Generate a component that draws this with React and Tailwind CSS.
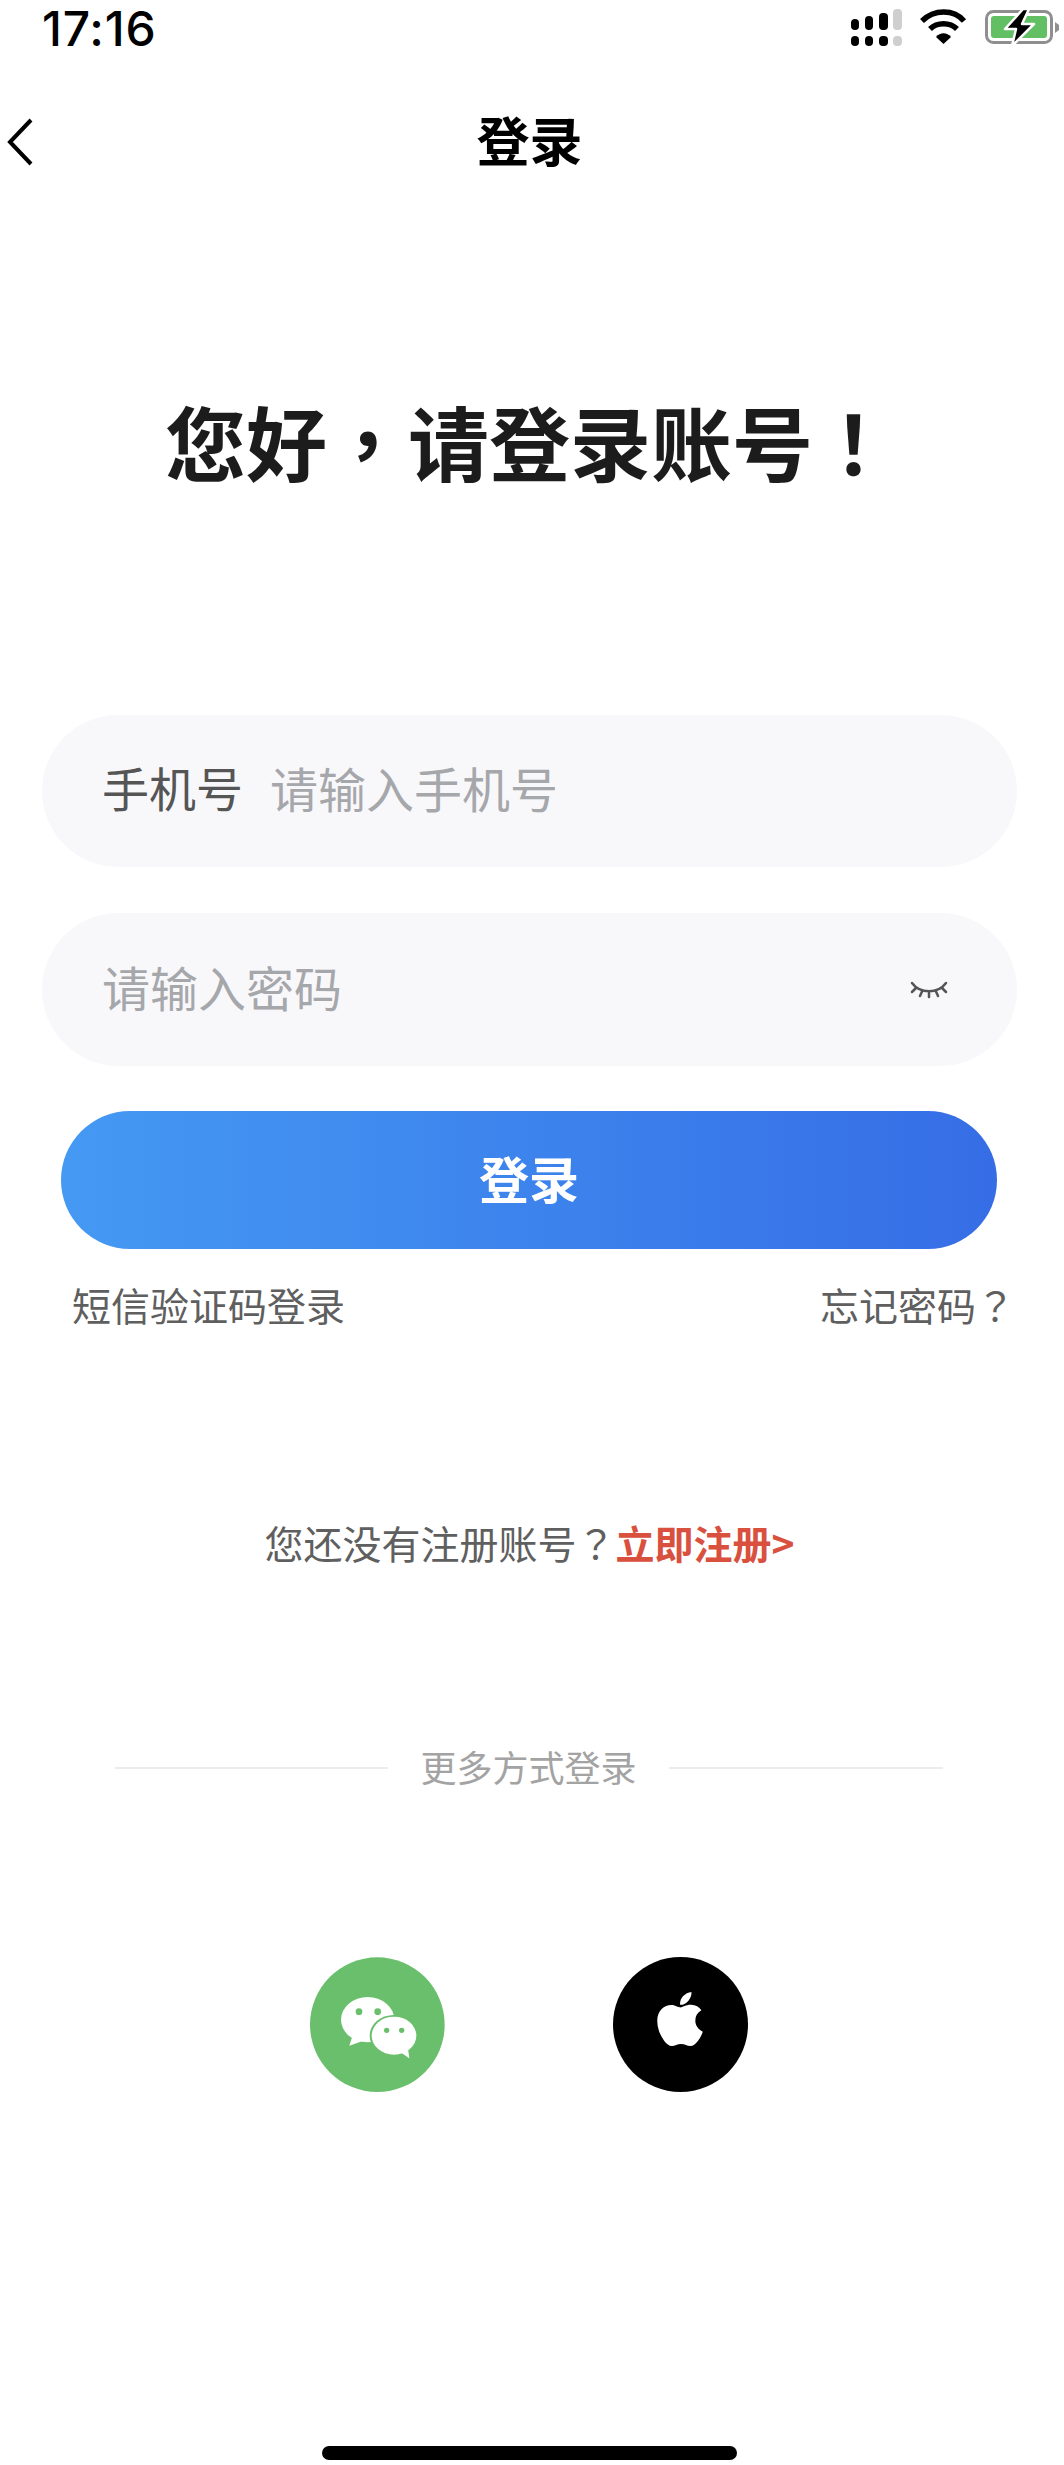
import { FaApple } from 'react-icons/fa';

const font = { fontFamily: '"Noto Sans CJK SC", "Noto Sans", sans-serif' };
// centered full-width punctuation, like the reference
const punct = { fontFamily: '"Noto Sans CJK TC", sans-serif' };

function StatusIcons() {
  return (
    <svg width="244" height="60" viewBox="0 0 244 60" className="block">
      {/* signal */}
      <rect x="31" y="19" width="8" height="11" rx="4" fill="#000" />
      <rect x="45" y="16" width="8" height="14" rx="4" fill="#000" />
      <rect x="59" y="13" width="9" height="17" rx="4" fill="#000" />
      <rect x="73" y="9" width="9" height="21" rx="4" fill="#cfcfcf" />
      <rect x="31" y="36" width="8" height="10" rx="4" fill="#000" />
      <rect x="45" y="36" width="8" height="10" rx="4" fill="#000" />
      <rect x="59" y="36" width="9" height="10" rx="4" fill="#000" />
      <rect x="73" y="36" width="9" height="10" rx="4" fill="#cfcfcf" />
      {/* wifi */}
      <path d="M102 21 C114 9 134 9 144 21" fill="none" stroke="#000" strokeWidth="5.5" />
      <path d="M110 29 C117 22 130 22 137 29" fill="none" stroke="#000" strokeWidth="5.5" />
      <path d="M116 37 C120 32 127 32 131 37 L123.500 44 Z" fill="#000" />
      {/* battery */}
      <rect x="166.500" y="11.500" width="65" height="31" rx="7" fill="none" stroke="#8f8f8f" strokeWidth="3" />
      <rect x="171" y="16" width="56" height="22" rx="3" fill="#62bf63" />
      <path d="M235 22 L239 25 L239 30 L235 33 Z" fill="#8f8f8f" />
      <path d="M203 9 L185 29 L196 29 L192 46 L214 24 L202 24 L209 9 Z" fill="#000" stroke="#fff" strokeWidth="2.500" strokeLinejoin="round" />
    </svg>
  );
}

function ClosedEye() {
  return (
    <svg width="38" height="18" viewBox="0 0 38 18" fill="none" stroke="#555" strokeWidth="2.5" strokeLinecap="round">
      <path d="M2 2 C10 13 28 13 36 2" />
      <path d="M6 7 L2 11" />
      <path d="M12 10.500 L10 15" />
      <path d="M19 12 L19 16" />
      <path d="M26 10.500 L28 15" />
      <path d="M32 7 L36 11" />
    </svg>
  );
}

function WechatIcon() {
  return (
    <svg width="135" height="135" viewBox="90 80 405 405" className="block">
      <circle cx="292" cy="283" r="202" fill="#6abf6c" />
      <ellipse cx="263" cy="268" rx="80" ry="68" fill="#fff" />
      <path d="M218 315 L208 346 L248 332 Z" fill="#fff" />
      <circle cx="237" cy="244" r="10" fill="#6abf6c" />
      <circle cx="293" cy="244" r="10" fill="#6abf6c" />
      <ellipse cx="341" cy="316" rx="72" ry="62" fill="#6abf6c" />
      <ellipse cx="342" cy="316" rx="67" ry="57" fill="#fff" />
      <path d="M360 365 L388 384 L384 355 Z" fill="#fff" />
      <circle cx="320" cy="300" r="8" fill="#6abf6c" />
      <circle cx="365" cy="300" r="8" fill="#6abf6c" />
    </svg>
  );
}

export default function App() {
  return (
    <div className="w-[1064px] h-[2465px] bg-white flex flex-col overflow-hidden" style={font}>
      {/* status bar */}
      <div className="h-[60px] flex justify-between">
        <span className="pl-[42px] pt-[1px] text-[48px] leading-[56px] font-medium text-black tracking-[0.8px]" style={{ fontFamily: 'Inter, sans-serif' }}>17:16</span>
        <StatusIcons />
      </div>

      <div className="w-[1059px] flex-1 flex flex-col">
        {/* nav */}
        <div className="relative h-[164px] flex items-center justify-center pb-[6px]">
          <svg width="30" height="50" viewBox="0 0 30 50" fill="none" stroke="#000" strokeWidth="4" className="absolute left-[5px] top-[57px]">
            <path d="M26 3 L5 25 L26 47" />
          </svg>
          <span className="text-[53px] leading-[60px] font-bold text-black">登录</span>
        </div>

        <h1 className="mt-[161px] h-[110px] text-center text-[81px] leading-[110px] font-bold text-[#1c1c1c]">
          您好<span style={punct}>，</span>请登录账号<span style={punct}>！</span>
        </h1>

        {/* form */}
        <div className="mt-[220px] mx-[42px] h-[152px] rounded-full bg-[#f8f8fb] flex items-center pl-[60px] pb-[8px] leading-[60px]">
          <span className="text-[47px] text-[#555555]">手机号</span>
          <span className="ml-[27px] text-[48px] text-[#a6a7ab]">请输入手机号</span>
        </div>
        <div className="mt-[46px] mx-[42px] h-[153px] rounded-full bg-[#f8f8fb] flex items-center justify-between pl-[60px] pr-[69px] text-[48px] leading-[60px]">
          <span className="text-[#a6a7ab] mb-[8px]">请输入密码</span>
          <ClosedEye />
        </div>
        <button className="mt-[45px] ml-[61px] mr-[62px] h-[138px] pb-[6px] rounded-full bg-gradient-to-r from-[#4599f3] to-[#366de6] text-white text-[50px] leading-[60px] font-bold">登录</button>

        <div className="mt-[29px] pl-[72px] pr-[44px] flex justify-between text-[39px] leading-[52px] text-[#5f5f5f]">
          <span>短信验证码登录</span>
          <span>忘记密码<span style={punct}>？</span></span>
        </div>

        <div className="mt-[186px] text-center text-[39px] leading-[52px] text-[#5f5f5f]">
          您还没有注册账号<span style={punct}>？</span><span className="font-bold text-[#d9503f]">立即注册&gt;</span>
        </div>

        {/* divider */}
        <div className="mt-[173px] ml-[115px] mr-[116px] flex items-center justify-between">
          <div className="w-[273px] h-[2px] bg-[#ececec]" />
          <span className="text-[36px] leading-[50px] mb-[4px] text-[#a3a3a3]">更多方式登录</span>
          <div className="w-[274px] h-[2px] bg-[#ececec]" />
        </div>

        {/* third party */}
        <div className="mt-[162px] pr-[2px] flex justify-center gap-[168px]">
          <WechatIcon />
          <div className="w-[135px] h-[135px] rounded-full bg-black flex items-center justify-center">
            <FaApple className="text-white text-[62px] mb-[12px]" />
          </div>
        </div>

        <div className="mt-auto mb-[5px] mx-auto w-[415px] h-[14px] rounded-full bg-black" />
      </div>
    </div>
  );
}
